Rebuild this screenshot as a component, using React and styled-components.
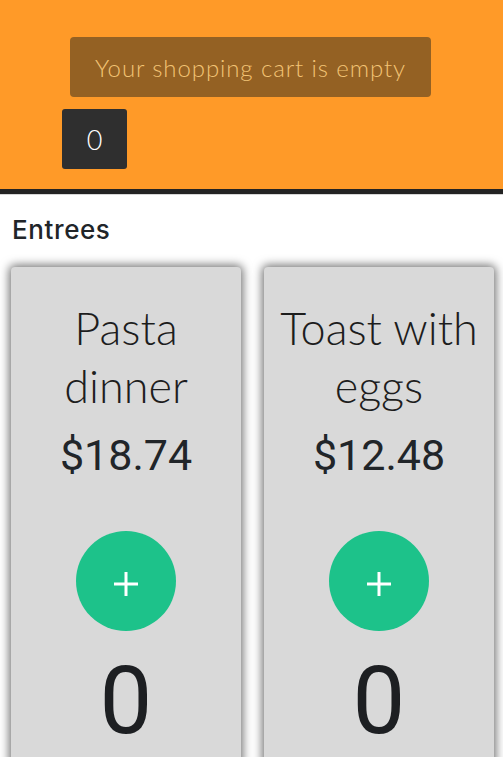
import React from "react";
import styled, { createGlobalStyle } from "styled-components";

const Global = createGlobalStyle`
  html, body { margin: 0; padding: 0; background: #fff; }
  body { font-family: Roboto, "Liberation Sans", sans-serif; color: #212529; }
  * { box-sizing: border-box; }
`;

const Header = styled.header`
  background: #ff9a28;
  height: 194px;
  border-bottom: 5px solid #232323;
  box-shadow: 0 1px 0 #d6d6d6;
  padding: 37px 0 0 62px;
  display: flex;
  flex-direction: column;
  align-items: flex-start;
  gap: 12px;
`;

const Message = styled.div`
  margin-left: 8px;
  width: 361px;
  height: 60px;
  border-radius: 4px;
  background: #946123;
  color: #f2c374;
  font-family: Lato, "Open Sans", sans-serif;
  font-weight: 300;
  font-size: 24px;
  letter-spacing: 0.9px;
  display: flex;
  align-items: center;
  justify-content: center;
`;

const CountButton = styled.button`
  width: 65px;
  height: 60px;
  border: none;
  border-radius: 3px;
  background: #2f2f2f;
  color: #fff;
  font-family: Lato, sans-serif;
  font-weight: 300;
  font-size: 27px;
  padding: 0;
`;

const Section = styled.section`
  padding: 20px 9px 0 11px;
`;

const SectionTitle = styled.h2`
  margin: 0 0 21px 1px;
  font-family: Inter, "Open Sans", sans-serif;
  font-weight: 500;
  font-size: 26px;
  letter-spacing: 0.6px;
  line-height: 32px;
  color: #212529;
`;

const Grid = styled.div`
  display: grid;
  grid-template-columns: 230px 230px;
  column-gap: 23px;
`;

const Card = styled.div`
  background: #d9d9d9;
  border-radius: 4px;
  box-shadow: 0 0 10px 2px rgba(0, 0, 0, 0.55);
  height: 500px;
  display: flex;
  flex-direction: column;
  align-items: center;
  padding-top: 32px;
`;

const Title = styled.h3`
  margin: 0;
  font-family: Lato, sans-serif;
  font-weight: 300;
  font-size: 45px;
  line-height: 58px;
  text-align: center;
  color: #1d1d1d;
`;

const Price = styled.div`
  margin-top: 14px;
  font-family: Roboto, sans-serif;
  font-size: 43px;
  line-height: 52px;
  color: #212529;
`;

const AddButton = styled.button`
  margin-top: 50px;
  width: 100px;
  height: 100px;
  border-radius: 50%;
  border: none;
  background: #1dc28a;
  display: flex;
  align-items: center;
  justify-content: center;
  padding: 0;
`;

const Qty = styled.div`
  margin-top: 26px;
  font-family: Roboto, sans-serif;
  font-size: 94px;
  line-height: 88px;
  color: #1d1f22;
`;

const Plus = () => (
  <svg width="24" height="24" viewBox="0 0 24 24" style={{ marginTop: 6 }}>
    <rect x="0" y="10.5" width="24" height="3" fill="#fff" />
    <rect x="10.5" y="0" width="3" height="24" fill="#fff" />
  </svg>
);

const items = [
  { name: "Pasta dinner", price: "$18.74" },
  { name: "Toast with eggs", price: "$12.48" },
];

export default function App() {
  return (
    <>
      <Global />
      <Header>
        <Message>Your shopping cart is empty</Message>
        <CountButton>0</CountButton>
      </Header>
      <Section>
        <SectionTitle>Entrees</SectionTitle>
        <Grid>
          {items.map((it) => (
            <Card key={it.name}>
              <Title>{it.name}</Title>
              <Price>{it.price}</Price>
              <AddButton aria-label="add">
                <Plus />
              </AddButton>
              <Qty>0</Qty>
            </Card>
          ))}
        </Grid>
      </Section>
    </>
  );
}
